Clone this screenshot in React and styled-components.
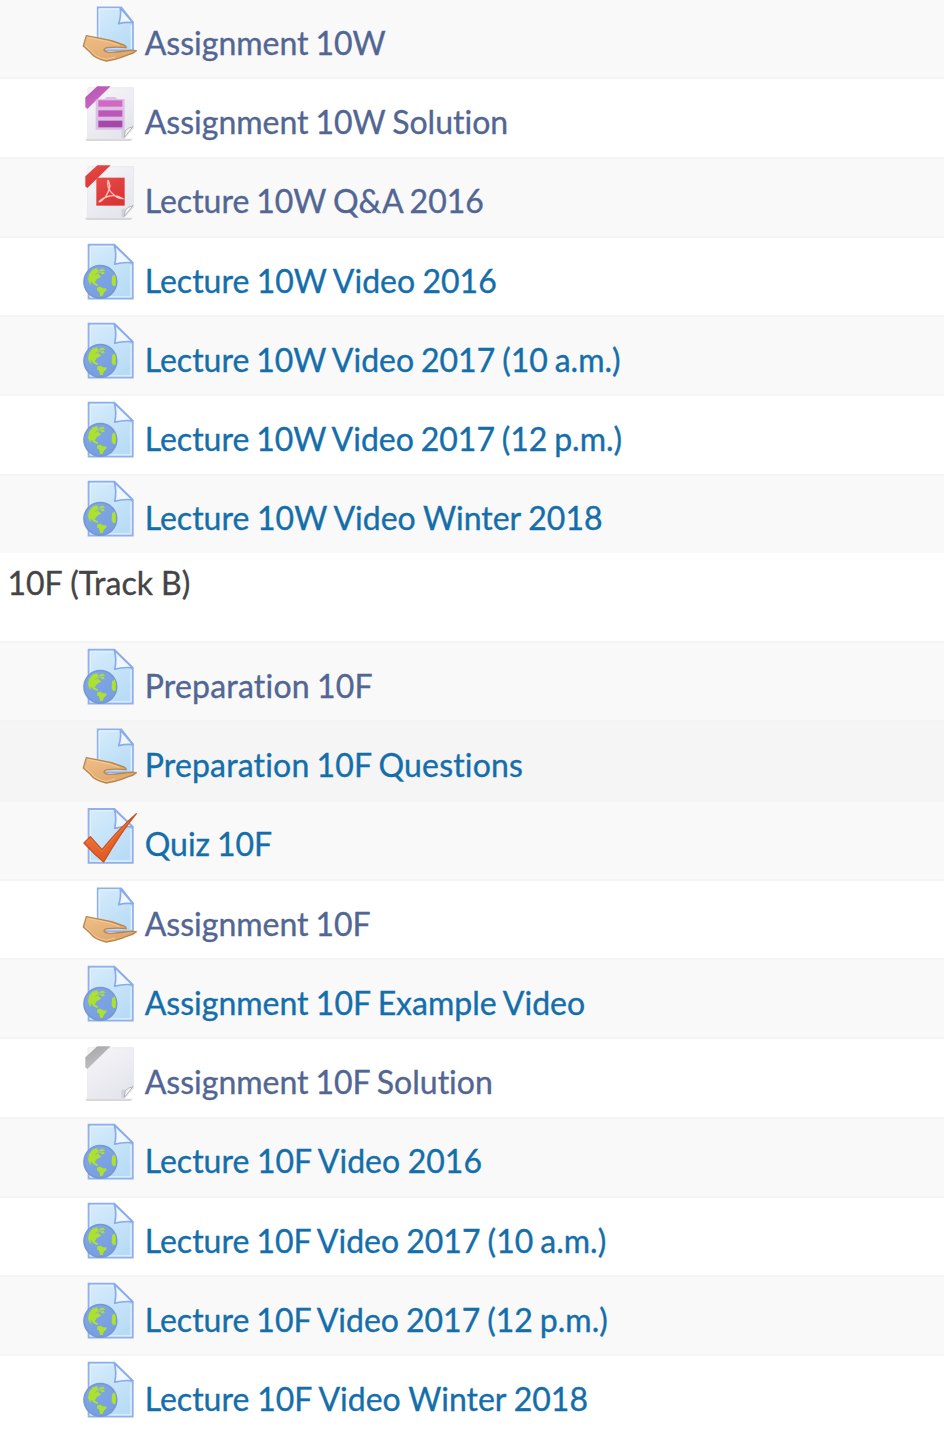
import React from 'react';
import styled, { createGlobalStyle } from 'styled-components';

const GlobalStyle = createGlobalStyle`
  body { margin: 0; background: #fff; overflow: hidden; }
  * { box-sizing: border-box; }
`;

const Page = styled.main`
  width: 944px;
  height: 1440px;
  overflow: hidden;
  font-family: Lato, 'Liberation Sans', sans-serif;
  font-size: 32px;
  line-height: 40px;
  font-variant-ligatures: none;
  -webkit-text-stroke: 0.35px;
  background: #fff;
`;

const List = styled.ul`
  list-style: none;
  margin: 0;
  padding: 0;
  margin-top: ${(p) => p.$offset || 0}px;
`;

const Row = styled.li`
  display: flex;
  align-items: flex-start;
  height: 79.22px;
  padding-left: 76px;
  border-top: 2px solid ${(p) => (p.$plain ? '#f9f9f9' : '#f4f4f4')};
  background: ${(p) => (p.$hover ? '#f5f5f5' : p.$shaded ? '#f9f9f9' : '#fff')};
`;

const Icon = styled.svg`
  flex: none;
  width: 70px;
  height: 70px;
  margin-top: -0.3px;
`;

const Link = styled.a`
  margin: 22.8px 0 0 -1.3px;
  white-space: nowrap;
  word-spacing: ${(p) => p.$gap}px;
  letter-spacing: ${(p) => p.$tracking}px;
  color: ${(p) => (p.$visited ? '#526694' : '#146eaa')};
`;

const Heading = styled.h2`
  height: 88.5px;
  margin: 0;
  padding: 10px 0 0 7.5px;
  font: inherit;
  color: #444;
`;

const Sheet = () => (
  <>
    <path d="M38 20H115L170 74V181H38Z" fill="url(#sheet)" stroke="#8fb0ec" strokeWidth="6" />
    <path d="M43 25H113M43 25V176H165V80" fill="none" stroke="#e0f1ff" strokeWidth="4" />
    <path d="M115 21L170 74Q143 71 116 78Q123 49 115 21Z" fill="#eef7ff" stroke="#8aabe9" strokeWidth="5" strokeLinejoin="round" />
  </>
);

const Globe = () => (
  <g transform="translate(0 0.5)">
    <Sheet />
    <circle cx="73" cy="131" r="49" fill="url(#globe)" stroke="#7797d6" strokeWidth="5" />
    <path d="M36 125L39 108L49 95L62 90L67 96L80 91L88 98L80 99L87 106L78 109L72 103L66 107L76 115L62 123L56 133L66 139L65 144L52 138L45 130L43 142Z" fill="#ace22e" />
    <path d="M63 149L72 145L81 150L92 151L91 157L84 163L80 173L73 174L69 160L63 156Z" fill="#ace22e" />
    <path d="M108 115L116 108L120 123L119 143L112 144L107 135Z" fill="#ace22e" />
    <path d="M66 97L75 102L81 98M58 109L68 102" fill="none" stroke="#86abd0" strokeWidth="3" />
  </g>
);

const Hand = () => (
  <>
    <path d="M65 22H136L171 67V151H65Z" fill="url(#sheet)" stroke="#8fb0ec" strokeWidth="5" />
    <path d="M70 27H130M70 27V144M166 76V146" fill="none" stroke="#e0f1ff" strokeWidth="4" />
    <path d="M133 24L171 68Q149 65 128 71Q136 49 133 24Z" fill="#eef7ff" stroke="#8aabe9" strokeWidth="5" strokeLinejoin="round" />
    <path d="M31 107C54 112 82 115 109 123L143 135Q151 138 151 143Q124 140 96 143Q85 144 84 150Q86 156 101 157C132 158 157 148 181 152Q174 159 158 164Q136 173 117 178L91 183C69 178 51 169 43 157L22 138Z" fill="url(#skin)" stroke="#b98650" strokeWidth="4" strokeLinejoin="round" />
    <path d="M35 112Q65 118 101 126L130 136M28 137L47 155Q61 173 91 178L117 171" fill="none" stroke="#f5cb98" strokeWidth="3" />
  </>
);

const Quiz = () => (
  <g transform="translate(0 -2)">
    <g transform="translate(0 6)"><Sheet /></g>
    <path d="M24 128L43 109L78 148Q127 87 181 40Q136 94 83 185Q54 161 24 128Z" fill="url(#tick)" stroke="#c9501f" strokeWidth="4" strokeLinejoin="round" />
    <path d="M30 127L43 115L78 154Q116 104 158 65" fill="none" stroke="#f07a40" strokeWidth="3" />
  </g>
);

const FilePage = ({ ribbon }) => (
  <>
    <path d="M28 181H170L164 188H31Z" fill="#c5c4c6" opacity=".65" filter="url(#soft)" />
    <g filter="url(#soft)">
      <path d="M36 28H173V150L144 181H34Z" fill="url(#paper)" stroke="#e4e4ea" strokeWidth="2" />
      <path d="M173 142Q158 148 147 157Q142 148 136 157L137 179L145 180Z" fill="#d2d2da" />
      <path d="M171 145Q157 148 148 157L145 177Z" fill="#f9f9fb" stroke="#b4b4bd" strokeWidth="3" />
      <path d="M28 57L64 24H104L34 92L28 87Z" fill={ribbon} />
    </g>
  </>
);

const Archive = () => (
  <g transform="translate(0 -2)">
    <FilePage ribbon="url(#violet)" />
    <g filter="url(#soft)">
      <path d="M59 62H85L92 56H117L124 62H146V154H59Z" fill="#d8afe0" opacity=".75" />
      <path d="M67 66H139V85H67Z" fill="#cf69c3" />
      <path d="M67 96H139V115H67Z" fill="#bb58b7" />
      <path d="M67 127H139V147H67Z" fill="#a449a8" />
    </g>
  </g>
);

const Pdf = () => (
  <g transform="translate(0 -2)">
    <FilePage ribbon="url(#red)" />
    <g filter="url(#soft)">
      <path d="M61 61H146V145H61Z" fill="url(#red)" />
      <path d="M68 134C85 131 98 105 102 86Q99 73 96 68M96 68Q91 93 110 109Q122 124 140 124Q123 112 101 116Q84 119 68 134" fill="none" stroke="#ffc6c0" strokeWidth="4" />
    </g>
  </g>
);

const Blank = () => <g transform="translate(0 -2)"><FilePage ribbon="url(#grey)" /></g>;

const icons = { globe: Globe, hand: Hand, quiz: Quiz, archive: Archive, pdf: Pdf, blank: Blank };

const Gradient = ({ id, from, to }) => (
  <linearGradient id={id} x1="0" y1="0" x2=".6" y2="1">
    <stop stopColor={from} />
    <stop offset="1" stopColor={to} />
  </linearGradient>
);

const Definitions = styled.svg`
  display: block;
  width: 0;
  height: 0;
`;

const trackA = [
  { icon: 'hand', title: 'Assignment 10W', visited: true },
  { icon: 'archive', title: 'Assignment 10W Solution', visited: true },
  { icon: 'pdf', title: 'Lecture 10W Q&A 2016', visited: true },
  { icon: 'globe', title: 'Lecture 10W Video 2016', gap: -0.8 },
  { icon: 'globe', title: 'Lecture 10W Video 2017 (10 a.m.)', gap: -1.3 },
  { icon: 'globe', title: 'Lecture 10W Video 2017 (12 p.m.)', gap: -1.4 },
  { icon: 'globe', title: 'Lecture 10W Video Winter 2018', gap: -0.5 },
];

const trackB = [
  { icon: 'globe', title: 'Preparation 10F', visited: true, tracking: 0.2 },
  { icon: 'hand', title: 'Preparation 10F Questions', hover: true, tracking: 0.17 },
  { icon: 'quiz', title: 'Quiz 10F' },
  { icon: 'hand', title: 'Assignment 10F', visited: true },
  { icon: 'globe', title: 'Assignment 10F Example Video', gap: -0.9 },
  { icon: 'blank', title: 'Assignment 10F Solution', visited: true },
  { icon: 'globe', title: 'Lecture 10F Video 2016', gap: -0.6 },
  { icon: 'globe', title: 'Lecture 10F Video 2017 (10 a.m.)', gap: -1.1 },
  { icon: 'globe', title: 'Lecture 10F Video 2017 (12 p.m.)', gap: -1.2 },
  { icon: 'globe', title: 'Lecture 10F Video Winter 2018', gap: -0.3 },
];

const Items = ({ items, offset, plainTop }) => (
  <List $offset={offset}>
    {items.map(({ icon, title, visited, hover, gap = -1.3, tracking = 0 }, i) => {
      const Drawing = icons[icon];
      return (
        <Row key={title} $shaded={i % 2 === 0} $hover={hover} $plain={plainTop && i === 0}>
          <Icon viewBox="0 0 210 210" aria-hidden="true"><Drawing /></Icon>
          <Link $visited={visited} $gap={gap} $tracking={tracking}>{title}</Link>
        </Row>
      );
    })}
  </List>
);

export default function App() {
  return (
    <Page>
      <GlobalStyle />
      <Definitions>
        <defs>
          <Gradient id="sheet" from="#d6ecfc" to="#b9dcf6" />
          <Gradient id="globe" from="#82a8e6" to="#779edf" />
          <Gradient id="skin" from="#efbf88" to="#dfa76b" />
          <Gradient id="tick" from="#f67c42" to="#dc561f" />
          <Gradient id="paper" from="#f6f6f9" to="#e5e5ed" />
          <Gradient id="violet" from="#ae55aa" to="#d36aca" />
          <Gradient id="red" from="#e74b48" to="#da3434" />
          <Gradient id="grey" from="#a4a4a7" to="#c4c4c7" />
          <filter id="soft"><feGaussianBlur stdDeviation="2.3" /></filter>
        </defs>
      </Definitions>
      <Items items={trackA} offset={-1.8} plainTop />
      <Heading>10F (Track B)</Heading>
      <Items items={trackB} />
    </Page>
  );
}
